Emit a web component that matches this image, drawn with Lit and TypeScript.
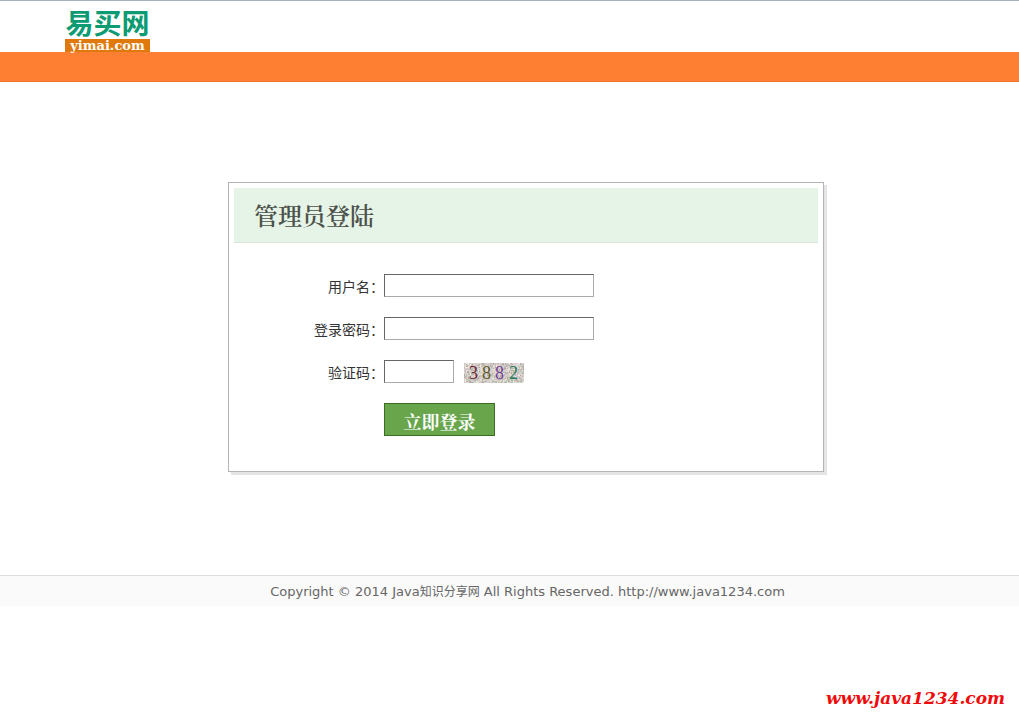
import { LitElement, html, css, svg } from "lit";
import { customElement } from "lit/decorators.js";

const NOISE_COLORS = ["#b9a9a4", "#e6dcd6", "#a9b8a8", "#d8cfd6", "#efeae4", "#c9b6bd", "#b7c4b4", "#dcd6cb"];

/** Deterministic speckle for the verification code background. */
function speckles() {
  let seed = 3882;
  const next = () => (seed = (seed * 1103515245 + 12345) % 2147483648) / 2147483648;
  const out = [];
  for (let i = 0; i < 560; i++) {
    const x = Math.floor(next() * 60);
    const y = Math.floor(next() * 20);
    const wide = next() > 0.5;
    const color = NOISE_COLORS[Math.floor(next() * NOISE_COLORS.length)];
    out.push(svg`<rect x=${x} y=${y} width=${wide ? 2 : 1} height=${wide ? 1 : 2} fill=${color}></rect>`);
  }
  return out;
}

@customElement("captcha-image")
export class CaptchaImage extends LitElement {
  static styles = css`
    :host { display: block; }
    svg { display: block; }
    text { font: 18px "Liberation Serif", serif; }
  `;
  render() {
    return html`<svg width="60" height="20" viewBox="0 0 60 20" role="img" aria-label="3882">
      <rect width="60" height="20" fill="#d5cec9"></rect>
      ${speckles()}
      <text x="5" y="16" fill="#6e2338">3</text>
      <text x="18" y="16" fill="#5f5a2c">8</text>
      <text x="31" y="16" fill="#74419a">8</text>
      <text x="45" y="16" fill="#1b7a5c">2</text>
    </svg>`;
  }
}

@customElement("app-root")
export class AppRoot extends LitElement {
  static styles = css`
    :host {
      display: block;
      position: relative;
      min-height: 100vh;
      box-sizing: border-box;
      background: #fff;
      color: #333;
      font: 14px/20px "DejaVu Sans", "Noto Sans CJK SC", sans-serif;
    }
    * { box-sizing: border-box; }
    .top { border-top: 1px solid #a3b3b8; padding: 8px 65px 0; }
    .logo { display: block; width: 85px; text-decoration: none; text-align: center; }
    .logo-name {
      display: block;
      padding-bottom: 4px;
      font: bold 28px/26px "Noto Sans CJK SC", sans-serif;
      color: #0d9b73;
      white-space: nowrap;
    }
    .logo-domain {
      display: block;
      background: #e0790c;
      color: #fff;
      font: bold 13px/13px "DejaVu Serif", serif;
    }
    .nav { height: 30px; background: #ff7f32; border-bottom: 1px solid #f07a33; }
    .main { padding: 100px 0 103px 33px; }
    .card {
      width: 596px;
      max-width: 100%;
      margin: 0 auto;
      padding: 5px 5px 35px;
      border: 1px solid #b4b4b4;
      box-shadow: 3px 3px 0 #e5e5e5;
    }
    .title {
      margin: 0 0 31px;
      padding: 0 20px;
      background: #e6f4e7;
      border-bottom: 1px solid #dbe6db;
      font: 600 24px/54px "Noto Serif CJK SC", "Noto Sans CJK SC", sans-serif;
      color: #4b514b;
    }
    .form { display: grid; gap: 20px; }
    .row { display: grid; grid-template-columns: 150px 1fr; align-items: start; height: 23px; }
    .row label { text-align: right; line-height: 25px; font-family: "Noto Sans CJK SC", sans-serif; }
    .controls { display: flex; gap: 10px; align-items: flex-end; }
    .input {
      width: 210px;
      height: 23px;
      padding: 1px 4px;
      background: #fff;
      border: 1px solid;
      border-color: #666 #aaa #aaa #666;
      border-radius: 0;
      font: inherit;
      outline: none;
    }
    .input.short { width: 70px; }
    .row.action { height: 33px; }
    .submit {
      width: 111px;
      height: 33px;
      padding: 3px 0 0;
      background: #68a54b;
      border: 1px solid #3b6e22;
      color: #fff;
      font: bold 18px/28px "Noto Serif CJK SC", "Noto Sans CJK SC", sans-serif;
    }
    .footer {
      padding: 6px 0 4px 36px;
      border-top: 1px solid #ddd;
      background: #fafafa;
      color: #666;
      font-size: 13px;
      text-align: center;
    }
    .cjk { font-size: 12px; }
    .mark {
      position: absolute;
      right: 14px;
      bottom: 12px;
      color: #f00a0a;
      font: italic bold 17px/24px "DejaVu Serif", serif;
      text-decoration: none;
    }
  `;

  render() {
    return html`
      <header>
        <div class="top">
          <a class="logo" href="#"><span class="logo-name">易买网</span><span class="logo-domain">yimai.com</span></a>
        </div>
        <div class="nav"></div>
      </header>
      <main class="main">
        <section class="card">
          <h1 class="title">管理员登陆</h1>
          <form class="form" @submit=${(e: Event) => e.preventDefault()}>
            <div class="row">
              <label for="user">用户名：</label>
              <div class="controls"><input class="input" id="user" type="text" /></div>
            </div>
            <div class="row">
              <label for="password">登录密码：</label>
              <div class="controls"><input class="input" id="password" type="password" /></div>
            </div>
            <div class="row">
              <label for="code">验证码：</label>
              <div class="controls">
                <input class="input short" id="code" type="text" />
                <captcha-image></captcha-image>
              </div>
            </div>
            <div class="row action">
              <span></span>
              <div class="controls"><button class="submit" type="submit">立即登录</button></div>
            </div>
          </form>
        </section>
      </main>
      <footer class="footer">
        Copyright © 2014 Java<span class="cjk">知识分享网</span> All Rights Reserved. http://www.java1234.com
      </footer>
      <a class="mark" href="#">www.java1234.com</a>
    `;
  }
}
